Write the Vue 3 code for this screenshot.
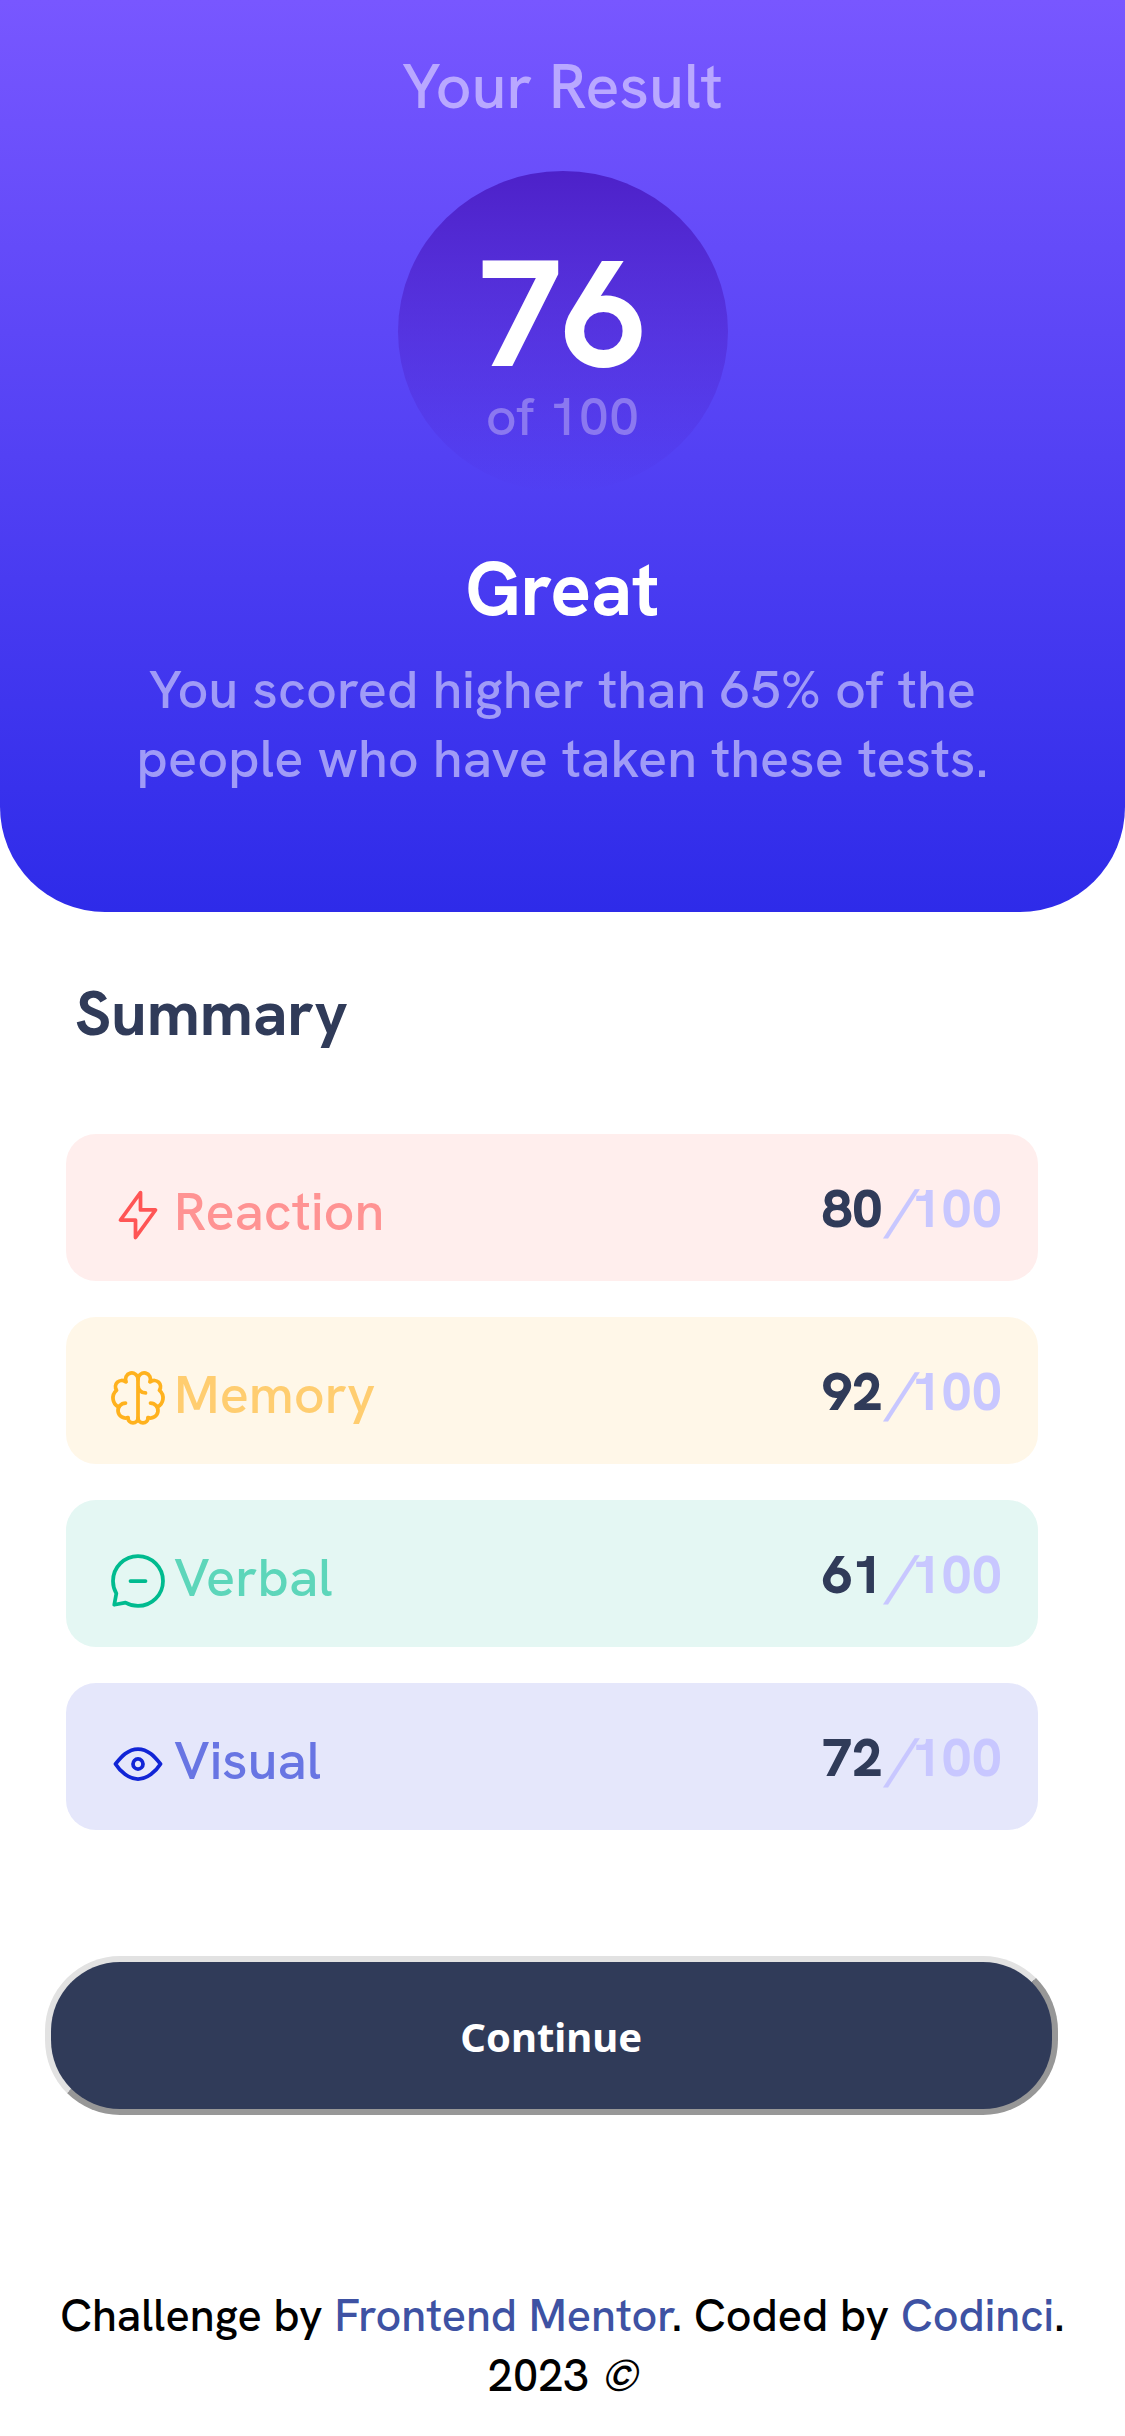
<script setup>
const categories = [
  {
    name: 'Reaction', key: 'reaction', score: 80,
    paths: ['M10.833 8.333V2.5l-6.666 9.167h5V17.5l6.666-9.167h-5Z'],
  },
  {
    name: 'Memory', key: 'memory', score: 92,
    paths: [
      'M5.833 11.667a2.5 2.5 0 1 0 .834 4.858',
      'M3.553 13.004a3.333 3.333 0 0 1-.728-5.53m.025-.067a2.083 2.083 0 0 1 2.983-2.824m.199.054A2.083 2.083 0 1 1 10 3.75v12.917a1.667 1.667 0 0 1-3.333 0M10 5.833a2.5 2.5 0 0 0 2.5 2.5m1.667 3.334a2.5 2.5 0 1 1-.834 4.858',
      'M16.447 13.004a3.334 3.334 0 0 0 .728-5.53m-.025-.067a2.083 2.083 0 0 0-2.983-2.824M10 3.75a2.083 2.083 0 1 1 3.967.887M10 16.667a1.667 1.667 0 0 0 3.333 0',
    ],
  },
  {
    name: 'Verbal', key: 'verbal', score: 61,
    paths: ['M7.5 10h5M10 18.333A8.333 8.333 0 1 0 1.667 10c0 1.518.406 2.942 1.115 4.167l-.699 3.75 3.75-.699A8.295 8.295 0 0 0 10 18.333Z'],
  },
  {
    name: 'Visual', key: 'visual', score: 72,
    paths: [
      'M10 11.667a1.667 1.667 0 1 0 0-3.334 1.667 1.667 0 0 0 0 3.334Z',
      'M17.5 10c-1.574 2.492-4.402 5-7.5 5s-5.926-2.508-7.5-5C4.416 7.632 6.66 5 10 5s5.584 2.632 7.5 5Z',
    ],
  },
]
</script>

<template>
  <main class="page">
    <section class="result">
      <h2 class="result-title">Your Result</h2>
      <div class="circle">
        <span class="score">76</span>
        <span class="total">of 100</span>
      </div>
      <h1 class="grade">Great</h1>
      <p class="message">
        You scored higher than 65% of the<br />
        people who have taken these tests.
      </p>
    </section>

    <section class="summary">
      <h2 class="summary-title">Summary</h2>
      <ul class="list">
        <li v-for="c in categories" :key="c.key" class="card" :class="c.key">
          <svg class="icon" viewBox="0 0 20 20" fill="none">
            <path v-for="d in c.paths" :key="d" :d="d" />
          </svg>
          <span class="name">{{ c.name }}</span>
          <span class="points">{{ c.score }}</span>
          <i class="slash">/</i>
          <span class="max">100</span>
        </li>
      </ul>
      <button class="continue" type="button">Continue</button>
    </section>

    <footer class="footer">
      <div class="credit">Challenge by <a>Frontend Mentor</a>. Coded by <a>Codinci</a>.</div>
      <div class="year">2023 <i>©</i></div>
    </footer>
  </main>
</template>

<style>
body {
  margin: 0;
  background: #fff;
}
</style>

<style scoped>
.page {
  width: 1125px;
  height: 2436px;
  overflow: hidden;
  display: flex;
  flex-direction: column;
  font-family: "Hanken Grotesk", "HK Grotesk", Inter, "Liberation Sans", sans-serif;
  font-weight: 500;
  background: #fff;
}
h1, h2, p, ul {
  margin: 0;
  padding: 0;
}
.result {
  box-sizing: border-box;
  height: 912px;
  padding-top: 46px;
  display: flex;
  flex-direction: column;
  align-items: center;
  border-radius: 0 0 105px 105px;
  background: linear-gradient(#7857ff, #2e2be9);
  text-align: center;
  white-space: nowrap;
}
.result-title {
  font-size: 63px;
  line-height: 80px;
  font-weight: 500;
  color: #b9a8ff;
}
.circle {
  box-sizing: border-box;
  width: 330px;
  height: 321px;
  margin-top: 45px;
  padding-top: 63px;
  border-radius: 50%;
  display: flex;
  flex-direction: column;
  align-items: center;
  background: linear-gradient(#4d21c9, rgba(37, 33, 201, 0));
}
.score {
  font-size: 150px;
  line-height: 160px;
  font-weight: 700;
  color: #fff;
}
.total {
  margin-top: -8px;
  font-size: 54px;
  line-height: 60px;
  color: #8b78f0;
}
.grade {
  margin-top: 49px;
  font-size: 75px;
  line-height: 96px;
  font-weight: 700;
  color: #fff;
}
.message {
  margin-top: 18px;
  font-size: 54px;
  line-height: 69px;
  color: #a09bf7;
}
.summary {
  display: flex;
  flex-direction: column;
}
.summary-title {
  margin: 61px 0 0 75px;
  font-size: 63px;
  line-height: 80px;
  font-weight: 700;
  color: #303b59;
}
.list {
  list-style: none;
  margin: 81px 0 0 66px;
  width: 972px;
  display: flex;
  flex-direction: column;
  gap: 36px;
}
.card {
  box-sizing: border-box;
  height: 147px;
  padding: 15px 36px 0 42px;
  display: flex;
  align-items: center;
  border-radius: 30px;
  font-size: 54px;
  line-height: 60px;
}
.icon {
  width: 60px;
  height: 60px;
  flex: none;
}
.icon path {
  stroke-width: 1.25;
  stroke-linecap: round;
  stroke-linejoin: round;
}
.name {
  margin: -8px 0 0 6px;
}
.points, .slash, .max {
  margin-top: -14px;
  font-weight: 700;
}
.points {
  margin-left: auto;
  font-weight: 800;
  color: #303b59;
}
.slash, .max {
  color: #c8c7ff;
}
.slash {
  margin-left: 6px;
  font-style: normal;
  transform: skewX(-14deg);
  transform-origin: 0 49px;
}
.reaction { background: #ffeeed; color: #ff9393; }
.memory { background: #fff7e8; color: #ffcd70; }
.verbal { background: #e4f7f3; color: #5dd6ba; }
.visual { background: #e5e7fb; color: #6875e3; }
.reaction path { stroke: #f55; }
.memory path { stroke: #ffb21e; }
.verbal path { stroke: #00bb8f; }
.visual path { stroke: #1125d6; }
.continue {
  box-sizing: border-box;
  width: 1012.5px;
  height: 159px;
  margin: 126px 0 0 45px;
  padding: 2px 0 0;
  border: 6px solid;
  border-color: #e2e2e2 #979797 #979797 #e2e2e2;
  border-radius: 75px;
  background: #303b59;
  color: #fff;
  font: 700 40px/1 "Noto Sans", "Open Sans", sans-serif;
}
.footer {
  margin-top: 171px;
  font-size: 45px;
  line-height: 60px;
  text-align: center;
  white-space: nowrap;
  color: #000;
}
.footer a {
  color: #3e52a3;
}
.year i {
  display: inline-block;
  font-style: normal;
  transform: skewX(-14deg);
  transform-origin: 0 46px;
}
</style>
